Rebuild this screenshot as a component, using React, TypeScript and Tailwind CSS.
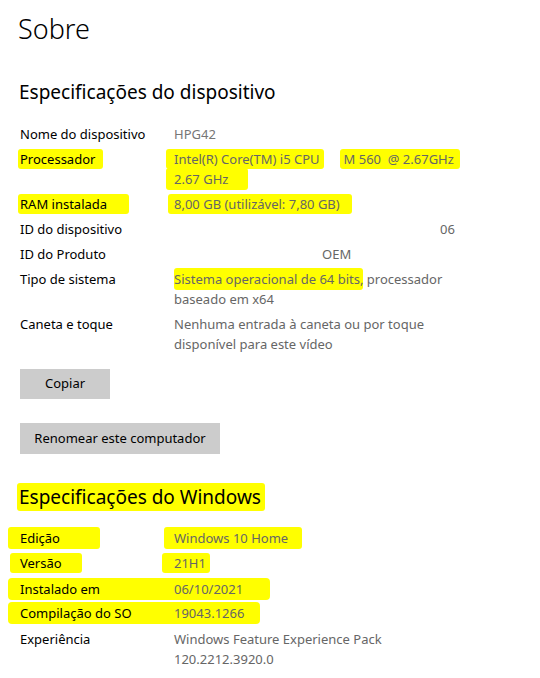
import type { ReactNode } from "react";

const font = { fontFamily: '"Noto Sans", "Open Sans", Arial, sans-serif' };

function Hl({ children, className = "" }: { children: ReactNode; className?: string }) {
  return <span className={`bg-[#ffff00] rounded-[3px] ${className}`}>{children}</span>;
}

type Row = { label: ReactNode; value: ReactNode };

function Specs({ rows }: { rows: Row[] }) {
  return (
    <div className="flex flex-col gap-[5px] text-[13px] leading-[20px]">
      {rows.map((r, i) => (
        <div key={i} className="flex">
          <div className="w-[154px] shrink-0 text-black">{r.label}</div>
          <div className="w-[288px] text-[#666666]">{r.value}</div>
        </div>
      ))}
    </div>
  );
}

export default function App() {
  const device: Row[] = [
    { label: "Nome do dispositivo", value: <span className="text-[#767676]">HPG42</span> },
    {
      label: <Hl className="pl-[2px] pr-[8px] py-[1px] -ml-[2px]">Processador</Hl>,
      value: (
        <>
          <span className="whitespace-nowrap">
            <Hl className="py-[1px] pr-[4px] -ml-[8px] pl-[8px]">Intel(R) Core(TM) i5 CPU</Hl>
            <span className="inline-block w-[16px]" />
            <Hl className="py-[1px] pl-[4px] pr-[6px]">M 560 &nbsp;@ 2.67GHz</Hl>
          </span>
          <br />
          <Hl className="py-[2px] pr-[20px] -ml-[8px] pl-[8px]">2.67 GHz</Hl>
        </>
      ),
    },
    {
      label: <Hl className="pl-[2px] pr-[22px] py-[1px] -ml-[2px]">RAM instalada</Hl>,
      value: <Hl className="py-[1px] pr-[12px] -ml-[6px] pl-[6px]">8,00 GB (utilizável: 7,80 GB)</Hl>,
    },
    { label: "ID do dispositivo", value: <span className="pl-[266px]">06</span> },
    { label: "ID do Produto", value: <span className="pl-[148px]">OEM</span> },
    {
      label: "Tipo de sistema",
      value: (
        <>
          <Hl className="py-[2px]">Sistema operacional de 64 bits,</Hl> processador baseado em x64
        </>
      ),
    },
    { label: "Caneta e toque", value: "Nenhuma entrada à caneta ou por toque disponível para este vídeo" },
  ];

  const windows: Row[] = [
    {
      label: <Hl className="pl-[12px] pr-[40px] py-[2px] -ml-[12px]">Edição</Hl>,
      value: <Hl className="py-[2px] pr-[14px] -ml-[10px] pl-[10px]">Windows 10 Home</Hl>,
    },
    {
      label: <Hl className="pl-[10px] pr-[20px] py-[1px] -ml-[10px]">Versão</Hl>,
      value: <Hl className="py-[1px] pr-[4px] -ml-[12px] pl-[12px]">21H1</Hl>,
    },
  ];

  return (
    <div className="min-h-[678px] w-[540px] bg-white pl-[20px] pt-[11px] text-black" style={font}>
      <h1 className="-ml-[2px] text-[27px] font-light leading-[36px]">Sobre</h1>

      <h2 className="-ml-[1px] mt-[32px] text-[19px] leading-[26px]">Especificações do dispositivo</h2>
      <div className="mt-[19px]">
        <Specs rows={device} />
      </div>

      <div className="mt-[15px] flex flex-col items-start gap-[24px] text-[13px]">
        <button className="h-[30px] w-[90px] bg-[#cccccc] text-black">Copiar</button>
        <button className="h-[31px] w-[200px] bg-[#cccccc] text-black">Renomear este computador</button>
      </div>

      <h2 className="-ml-[1px] mt-[30px] text-[19px] leading-[26px]">
        <Hl className="-ml-[2px] pl-[2px] pr-[4px] py-[1px]">Especificações do Windows</Hl>
      </h2>
      <div className="mt-[18px] flex flex-col gap-[5px] text-[13px] leading-[20px]">
        <Specs rows={windows} />
        <div className="-ml-[12px] flex flex-col gap-[2px]">
          <div className="flex w-[262px] rounded-[4px] bg-[#ffff00] py-[1px] pl-[12px]">
            <div className="w-[154px] shrink-0">Instalado em</div>
            <div className="text-[#666666]">06/10/2021</div>
          </div>
          <div className="flex w-[252px] rounded-[4px] bg-[#ffff00] py-[1px] pl-[12px]">
            <div className="w-[154px] shrink-0">Compilação do SO</div>
            <div className="text-[#666666]">19043.1266</div>
          </div>
        </div>
        <Specs rows={[{ label: "Experiência", value: "Windows Feature Experience Pack 120.2212.3920.0" }]} />
      </div>
    </div>
  );
}
